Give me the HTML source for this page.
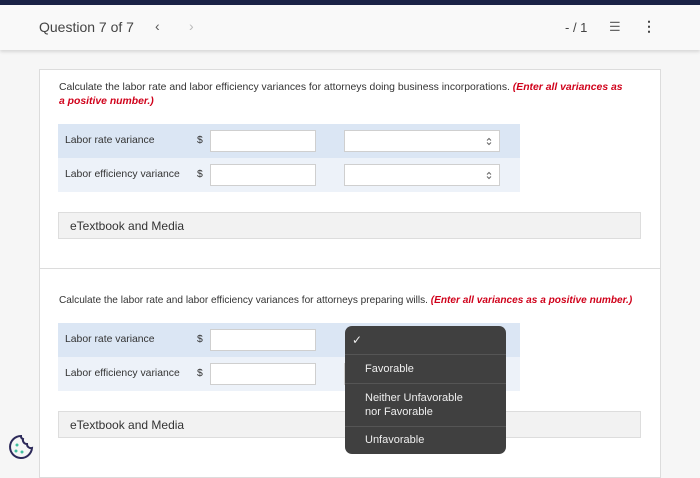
<!DOCTYPE html>
<html><head><style>
*{box-sizing:border-box;margin:0;padding:0}
body{width:700px;height:468px;overflow:hidden;background:#f6f6f6;font-family:"Liberation Sans",sans-serif;position:relative;color:#333}
.top{position:absolute;left:0;top:0;width:700px;height:5px;background:#1b2347}
.hdr{position:absolute;left:0;top:5px;width:700px;height:45px;background:#f9f9f9;box-shadow:0 2px 3px rgba(0,0,0,.12)}
.abs{position:absolute}
.card{position:absolute;left:39px;width:622px;background:#fff;border:1px solid #dcdcdc}
.q{font-size:10.4px;color:#333}
.red{color:#d0021b;font-weight:bold;font-style:italic}
.row{position:absolute;left:18px;width:462px;height:34px;font-size:10.4px}
.row span{position:absolute;top:11px}
.inp{position:absolute;top:6px;height:22px;background:#fff;border:1px solid #cfcfcf}
.chev{position:absolute;right:7px;top:6px;width:6px;height:9px}
.et{position:absolute;left:18px;width:583px;height:27px;background:#f2f2f2;border:1px solid #ddd;font-size:12px;padding:6px 11px;color:#333}
.dd{position:absolute;left:345px;top:326px;width:161px;height:128px;background:#404040;border-radius:7px;color:#eee;font-size:11px}
.dd div{position:absolute;left:0;width:100%;border-top:1px solid #555}
</style></head><body>
<div class="top"></div>
<div class="hdr">
<div class="abs" style="left:39px;top:14px;font-size:14px;color:#444">Question 7 of 7</div>
<div class="abs" style="left:155px;top:13px;font-size:14px;color:#555">‹</div>
<div class="abs" style="left:189px;top:13px;font-size:14px;color:#bbb">›</div>
<div class="abs" style="left:565px;top:15px;font-size:13px;color:#444">- / 1</div>
<div class="abs" style="left:609px;top:14px;font-size:13px;color:#666">☰</div>
<div class="abs" style="left:642px;top:13px;font-size:14px;color:#444;font-weight:bold">⋮</div>
</div>
<div class="card" style="top:69px;height:200px">
<div class="abs q" style="left:19px;top:11px;width:570px;line-height:14px">Calculate the labor rate and labor efficiency variances for attorneys doing business incorporations. <span class="red">(Enter all variances as a positive number.)</span></div>
<div class="row" style="top:54px;background:#dbe6f4"><span style="left:7px">Labor rate variance</span><span style="left:139px">$</span><div class="inp" style="left:152px;width:106px"></div><div class="inp" style="left:286px;width:156px"><svg class="chev" viewBox="0 0 6 9"><path d="M1 3.5L3 1.5 5 3.5M1 5.5L3 7.5 5 5.5" fill="none" stroke="#666" stroke-width="1"/></svg></div></div>
<div class="row" style="top:88px;background:#edf2f9"><span style="left:7px">Labor efficiency variance</span><span style="left:139px">$</span><div class="inp" style="left:152px;width:106px"></div><div class="inp" style="left:286px;width:156px"><svg class="chev" viewBox="0 0 6 9"><path d="M1 3.5L3 1.5 5 3.5M1 5.5L3 7.5 5 5.5" fill="none" stroke="#666" stroke-width="1"/></svg></div></div>
<div class="et" style="top:142px">eTextbook and Media</div>
</div>
<div class="card" style="top:268px;height:210px">
<div class="abs q" style="left:19px;top:26px;width:600px;font-size:10.1px">Calculate the labor rate and labor efficiency variances for attorneys preparing wills. <span class="red">(Enter all variances as a positive number.)</span></div>
<div class="row" style="top:54px;background:#dbe6f4"><span style="left:7px">Labor rate variance</span><span style="left:139px">$</span><div class="inp" style="left:152px;width:106px"></div></div>
<div class="row" style="top:88px;background:#edf2f9"><span style="left:7px">Labor efficiency variance</span><span style="left:139px">$</span><div class="inp" style="left:152px;width:106px"></div><div class="inp" style="left:286px;width:20px"></div></div>
<div class="et" style="top:142px">eTextbook and Media</div>
</div>
<div class="dd">
<span class="abs" style="left:7px;top:7px;font-size:12px">✓</span>
<div style="top:28px;padding:8px 20px">Favorable</div>
<div style="top:57px;padding:7px 20px;line-height:14px">Neither Unfavorable<br>nor Favorable</div>
<div style="top:100px;padding:7px 20px">Unfavorable</div>
</div>
<svg class="abs" style="left:7px;top:433px" width="28" height="28" viewBox="0 0 28 28"><path d="M14 3a11 11 0 1 0 11 12 4 4 0 0 1-5-4 4 4 0 0 1-4-5 3 3 0 0 1-2-3z" fill="none" stroke="#2d2a5a" stroke-width="2"/><circle cx="10" cy="12" r="1.5" fill="#3fbf9f"/><circle cx="9" cy="18" r="1.5" fill="#3fbf9f"/><circle cx="15" cy="19" r="1.5" fill="#3fbf9f"/></svg>
</body></html>
